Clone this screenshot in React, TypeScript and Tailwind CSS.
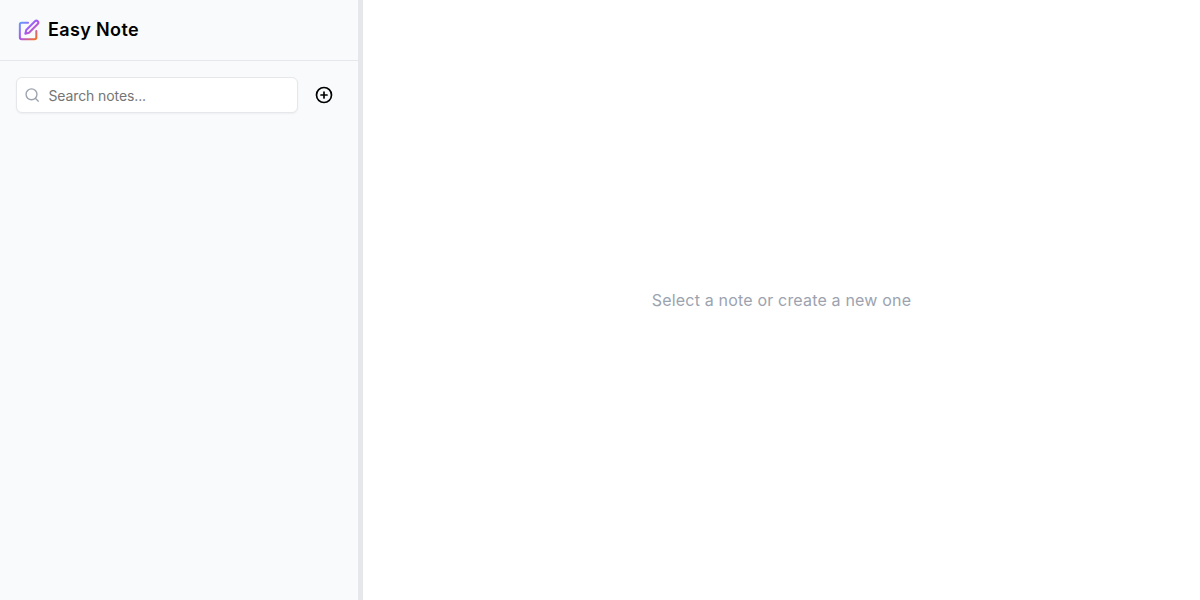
import { CirclePlus, Search } from "lucide-react";

function LogoIcon() {
  return (
    <svg width="22" height="22" viewBox="0 0 24 24" fill="none" strokeWidth="2.2" strokeLinecap="round" strokeLinejoin="round" className="shrink-0">
      <defs>
        <linearGradient id="logo-grad" x1="2" y1="2" x2="21" y2="22" gradientUnits="userSpaceOnUse">
          <stop offset="0" stopColor="#60a5fa" />
          <stop offset="0.5" stopColor="#a855f7" />
          <stop offset="1" stopColor="#f97316" />
        </linearGradient>
      </defs>
      <path stroke="url(#logo-grad)" d="M11 4H4a2 2 0 0 0-2 2v14a2 2 0 0 0 2 2h14a2 2 0 0 0 2-2v-7" />
      <path stroke="url(#logo-grad)" d="M18.5 2.5a2.121 2.121 0 0 1 3 3L12 15l-4 1 1-4 9.5-9.5z" />
    </svg>
  );
}

export default function App() {
  return (
    <div className="flex h-screen w-full bg-white font-['Inter',sans-serif]">
      {/* Sidebar */}
      <aside className="flex w-[358px] shrink-0 flex-col bg-[#f9fafb]">
        <header className="flex h-[61px] items-center gap-[8px] border-b border-[#e5e7eb] pl-[18px]">
          <LogoIcon />
          <h1 className="text-lg font-semibold tracking-[0.02em] text-black">Easy Note</h1>
        </header>
        <div className="flex items-center gap-[10px] pl-4 pt-4">
          <div className="flex h-9 w-[282px] items-center gap-[8px] rounded-md border border-[#e5e7eb] bg-white pl-[7px] shadow-xs">
            <Search className="h-[18px] w-[18px] text-[#9ca3af]" />
            <input
              placeholder="Search notes..."
              className="w-full bg-transparent pt-[2px] text-sm tracking-[-0.1px] outline-none placeholder:text-[#757575]"
            />
          </div>
          <button type="button" className="flex h-8 w-8 items-center justify-center text-black">
            <CirclePlus className="h-[18px] w-[18px]" strokeWidth={2.25} />
          </button>
        </div>
      </aside>

      {/* Resize handle */}
      <div className="w-[5px] shrink-0 bg-[#e5e7eb]" />

      {/* Empty state */}
      <main className="flex flex-1 items-center justify-center">
        <p className="text-base tracking-[0.18px] text-[#9ca3af]">Select a note or create a new one</p>
      </main>
    </div>
  );
}
